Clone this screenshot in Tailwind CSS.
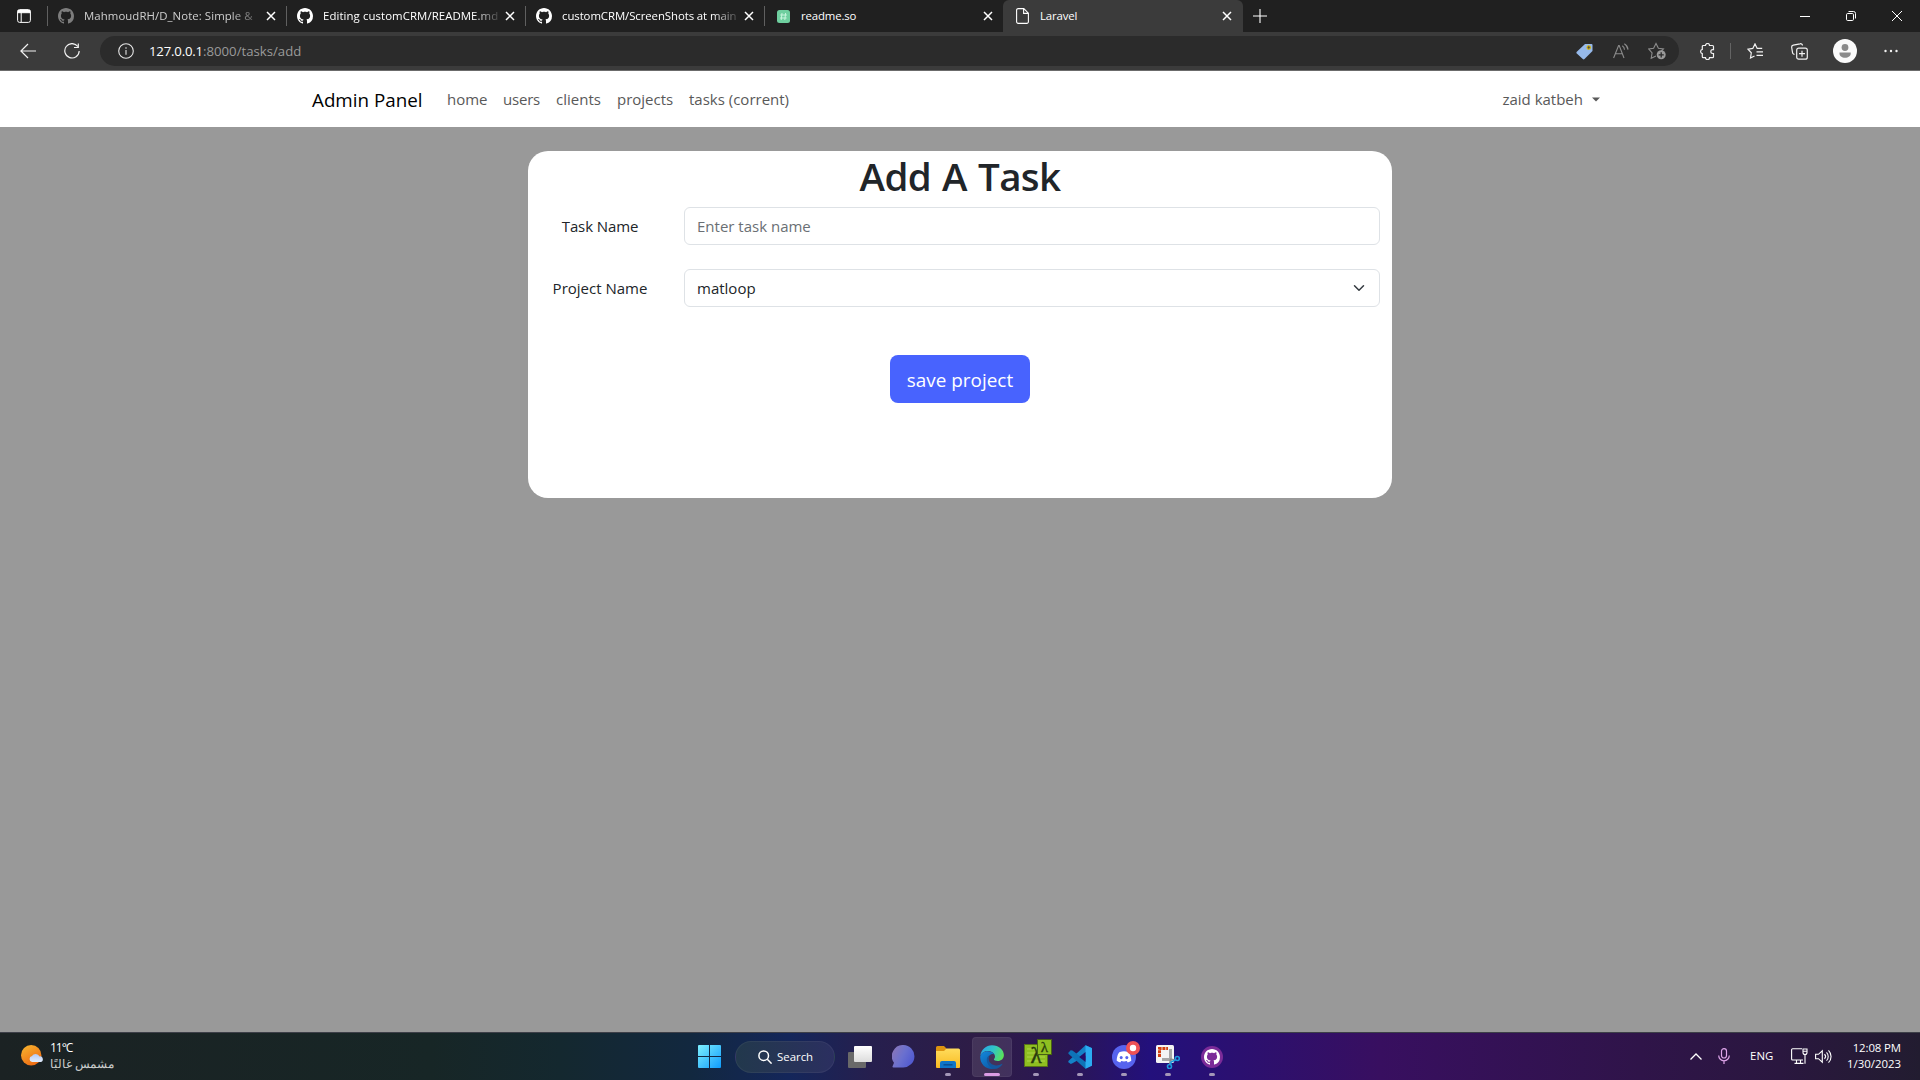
<!DOCTYPE html>
<html lang="en">
<head>
<meta charset="utf-8">
<title>Laravel</title>
<script src="https://cdn.jsdelivr.net/npm/@tailwindcss/browser@4"></script>
</head>
<body class="flex h-[1080px] w-[1920px] flex-col overflow-hidden bg-[#999999] font-['Open_Sans','Noto_Sans',sans-serif]">
<svg class="hidden">
  <symbol id="gh" viewBox="0 0 16 16"><path d="M8 0C3.58 0 0 3.58 0 8c0 3.54 2.29 6.53 5.47 7.59.4.07.55-.17.55-.38 0-.19-.01-.82-.01-1.49-2.01.37-2.53-.49-2.69-.94-.09-.23-.48-.94-.82-1.13-.28-.15-.68-.52-.01-.53.63-.01 1.08.58 1.23.82.72 1.21 1.87.87 2.33.66.07-.52.28-.87.51-1.07-1.78-.2-3.64-.89-3.64-3.95 0-.87.31-1.59.82-2.15-.08-.2-.36-1.02.08-2.12 0 0 .67-.21 2.2.82.64-.18 1.32-.27 2-.27s1.36.09 2 .27c1.53-1.04 2.2-.82 2.2-.82.44 1.1.16 1.92.08 2.12.51.56.82 1.27.82 2.15 0 3.07-1.87 3.75-3.65 3.95.29.25.54.73.54 1.48 0 1.07-.01 1.93-.01 2.2 0 .21.15.46.55.38A8.01 8.01 0 0 0 16 8c0-4.42-3.58-8-8-8z"/></symbol>
  <symbol id="x" viewBox="0 0 10 10"><path d="M1 1l8 8M9 1l-8 8" fill="none" stroke="currentColor" stroke-width="1.5"/></symbol>
</svg>

<!-- tab strip -->
<div class="flex h-8 shrink-0 items-center bg-[#202020] text-[11.4px] text-white">
  <div class="flex w-[47px] items-center pl-[17px]">
    <svg class="size-[14px]" viewBox="0 0 14 14" fill="none" stroke="#fff"><rect x=".6" y=".6" width="12.8" height="12.8" rx="2"/><path d="M1 1.5h12v2.2H1z" fill="#fff"/><path d="M4.2 3v10"/></svg>
  </div>
  <div class="flex h-5 w-[239px] items-center border-l border-[#606060] pl-[10px]">
    <svg class="size-4 text-[#7d7d7d]" fill="currentColor"><use href="#gh"/></svg>
    <span class="ml-[10px] w-[176px] whitespace-nowrap text-[#cfcfcf] tracking-[0.07px] [mask-image:linear-gradient(to_right,#000_146px,transparent_182px)]">MahmoudRH/D_Note: Simple &amp;</span>
    <svg class="ml-[6px] size-[10px]"><use href="#x"/></svg>
  </div>
  <div class="flex h-5 w-[239px] items-center border-l border-[#606060] pl-[10px]">
    <svg class="size-4" fill="#fff"><use href="#gh"/></svg>
    <span class="ml-[10px] w-[176px] whitespace-nowrap tracking-[0.08px] [mask-image:linear-gradient(to_right,#000_150px,transparent_180px)]">Editing customCRM/README.md</span>
    <svg class="ml-[6px] size-[10px]"><use href="#x"/></svg>
  </div>
  <div class="flex h-5 w-[239px] items-center border-l border-[#606060] pl-[10px]">
    <svg class="size-4" fill="#fff"><use href="#gh"/></svg>
    <span class="ml-[10px] w-[176px] whitespace-nowrap tracking-[-0.08px] [mask-image:linear-gradient(to_right,#000_150px,transparent_180px)]">customCRM/ScreenShots at main</span>
    <svg class="ml-[6px] size-[10px]"><use href="#x"/></svg>
  </div>
  <div class="flex h-5 w-[239px] items-center border-l border-[#606060] pl-[12px]">
    <svg class="size-[13px]" viewBox="0 0 13 13"><rect width="13" height="13" rx="2.5" fill="#6fcf9f"/><path d="M5 3l-.8 7M8.6 3l-.8 7M3.3 5h6.6M3 8h6.6" stroke="#c8f5dd" fill="none"/></svg>
    <span class="ml-[11px] w-[176px] whitespace-nowrap tracking-[-0.15px]">readme.so</span>
    <svg class="ml-[6px] size-[10px]"><use href="#x"/></svg>
  </div>
  <div class="flex h-8 w-[240px] items-center rounded-t-md bg-[#3b3b3b] pl-[13px]">
    <svg class="h-4 w-[13px]" viewBox="0 0 13 16" fill="none" stroke="#fff" stroke-width="1.1"><path d="M2.4.6h5.4l4.6 4.6v8.6a1.6 1.6 0 0 1-1.6 1.6H2.2A1.6 1.6 0 0 1 .6 13.8V2.2A1.6 1.6 0 0 1 2.4.6zM7.6.8v4.6h4.6"/></svg>
    <span class="ml-[11px] w-[176px] whitespace-nowrap tracking-[-0.15px]">Laravel</span>
    <svg class="ml-[6px] size-[10px]"><use href="#x"/></svg>
  </div>
  <svg class="ml-[10px] size-[14px]" viewBox="0 0 14 14" stroke="#fff" stroke-width="1.1"><path d="M7 0v14M0 7h14"/></svg>
  <div class="ml-auto mr-[18px] flex items-center gap-9 text-white">
    <svg class="size-[10px]" viewBox="0 0 10 10" stroke="#fff"><path d="M0 5.5h10"/></svg>
    <svg class="size-[10px]" viewBox="0 0 10 10" fill="none" stroke="#fff"><rect x=".5" y="2.5" width="7" height="7" rx="1.2"/><path d="M2.5.5H7.5a2 2 0 0 1 2 2V7.5"/></svg>
    <svg class="size-[10px]" viewBox="0 0 10 10" stroke="#fff"><path d="M0 0l10 10M10 0L0 10"/></svg>
  </div>
</div>

<!-- toolbar -->
<div class="flex h-[39px] shrink-0 items-center border-b border-[#6b6b6b] bg-[#3b3b3b] pl-5">
  <svg class="h-4 w-4" viewBox="0 0 16 16" fill="none" stroke="#f2f2f2" stroke-width="1.2"><path d="M16 8H1M8 1L.9 8 8 15"/></svg>
  <svg class="ml-7 h-4 w-4" viewBox="0 0 16 16" fill="none" stroke="#f2f2f2" stroke-width="1.2"><path d="M13.8 3.5A7.2 7.2 0 1 0 15.200 8M14.300.5V4.500H10"/></svg>
  <div class="ml-5 flex h-[30px] w-[1579px] items-center rounded-full bg-[#2b2b2b] pl-[18px] text-[13.2px]">
    <svg class="size-4" viewBox="0 0 16 16" fill="none" stroke="#e6e6e6" stroke-width="1.1"><circle cx="8" cy="8" r="7.3"/><path d="M8 7v4.800M8 4.200v1.500"/></svg>
    <span class="ml-[15px] w-[54px] pt-[2px] text-white tracking-[-0.2px]">127.0.0.1</span><span class="pt-[2px] text-[#9a9a9a]">:8000/tasks/add</span>
    <div class="ml-auto mr-[13px] flex items-center">
      <svg class="h-[17px] w-[17px]" viewBox="0 0 17 17"><path d="M9 1h6.500a1 1 0 0 1 1 1v6L8.500 16a1.200 1.200 0 0 1-1.700 0L.8 10.500a1.200 1.200 0 0 1 0-1.700z" fill="#96b9ea"/><circle cx="12.700" cy="4.500" r="1.700" fill="#4b4b4b" stroke="#d9b400" stroke-width="1.100"/></svg>
      <svg class="ml-5 h-4 w-4" viewBox="0 0 16 16" fill="none" stroke="#8c8c8c" stroke-width="1.1"><path d="M.6 15L5.600 2.500h.6L11 15M2.400 10.800h6.900M9.300 2.800a5 5 0 0 1 2.200 4M11.300.8a7.500 7.500 0 0 1 3.700 5.800"/></svg>
      <svg class="ml-[19px] h-[18px] w-[18px]" viewBox="0 0 18 18" fill="none" stroke="#8c8c8c" stroke-width="1.1"><path d="M8 14l-4.800 2.200.9-5.300L.8 7l4.800-.7L8 1.500l2.400 4.800 5 .7-2 2"/><circle cx="13.200" cy="12.800" r="4.500" fill="#9a9a9a" stroke="none"/><path d="M13.200 10.200v5.200M10.600 12.800h5.200" stroke="#2b2b2b" stroke-width="1.3"/></svg>
    </div>
  </div>
  <svg class="ml-[20px] h-[17px] w-4" viewBox="0 0 16 17" fill="none" stroke="#f2f2f2" stroke-width="1.2"><path d="M4.300 2.500h2.200a2 2 0 0 1 4 0h3a1 1 0 0 1 1 1v3.200h-.8a1.900 1.900 0 0 0 0 3.800h.8v3.200a1 1 0 0 1-1 1h-3a2 2 0 0 1-4 0H4.300a1 1 0 0 1-1-1v-3a2.200 2.200 0 0 1 0-4.300V3.500a1 1 0 0 1 1-1z"/></svg>
  <div class="ml-[15px] h-4 w-px bg-[#646464]"></div>
  <svg class="ml-4 h-4 w-4" viewBox="0 0 16 16" fill="none" stroke="#f2f2f2" stroke-width="1.2"><path d="M7.500 13l-4 2 .8-5.200L1 6.200l4.800-.8L8 .9l2.200 4.500h5M9.500 8.800H16M9.500 12.300H16"/></svg>
  <svg class="ml-7 h-[17px] w-[17px]" viewBox="0 0 17 17" fill="none" stroke="#f2f2f2" stroke-width="1.2"><path d="M3.500 11.500l-1-.5a2 2 0 0 1-1-1.500L.7 4.500A2 2 0 0 1 2.300 2.200L9 .8a2 2 0 0 1 2.500 1.700"/><rect x="5.700" y="5.200" width="10.600" height="11" rx="2"/><path d="M11 7.700v6M8 10.700h6"/></svg>
  <svg class="ml-[25px] size-6" viewBox="0 0 24 24"><circle cx="12" cy="12" r="12" fill="#fafafa"/><circle cx="12" cy="8.500" r="3.400" fill="#8a8a8a"/><path d="M6.500 13.500h11.200v1c0 2.500-2.300 4.300-5.600 4.300s-5.600-1.800-5.600-4.300z" fill="#8a8a8a"/></svg>
  <svg class="ml-[27px] h-1 w-[14px]" viewBox="0 0 14 4" fill="#f2f2f2"><circle cx="1.500" cy="2" r="1.200"/><circle cx="7" cy="2" r="1.200"/><circle cx="12.500" cy="2" r="1.200"/></svg>
</div>

<!-- site navigation -->
<nav class="flex h-14 shrink-0 items-center bg-white pl-[312px] pr-[320px] text-[15px] text-[#595959]">
  <a class="w-[135px] pt-[2px] text-[18.8px] text-black">Admin Panel</a>
  <a class="w-[56px]">home</a>
  <a class="w-[53px] tracking-[-0.2px]">users</a>
  <a class="w-[61px]">clients</a>
  <a class="w-[72px]">projects</a>
  <a>tasks (corrent)</a>
  <a class="ml-auto flex items-center">zaid katbeh
    <svg class="ml-[9px] h-[5px] w-[8px]" viewBox="0 0 9 5" fill="#595959"><path d="M0 .3h9L4.500 4.800z"/></svg>
  </a>
</nav>

<main class="flex flex-1 flex-col items-center pt-6">
  <section class="flex h-[347px] w-[864px] flex-col rounded-[20px] bg-white pr-3 text-[15px] text-[#212529]">
    <h1 class="ml-3 h-14 whitespace-nowrap text-center text-[38.5px]/[51px] font-semibold tracking-[-0.6px] [word-spacing:1.6px]">Add A Task</h1>
    <div class="flex h-[38px] items-center">
      <label class="w-[144px] text-center tracking-[-0.1px]">Task Name</label>
      <div class="ml-3 flex h-full flex-1 items-center rounded-md border border-[#dee2e6] px-3 text-[#6a6f74]">Enter task name</div>
    </div>
    <div class="mt-6 flex h-[38px] items-center">
      <label class="w-[144px] text-center">Project Name</label>
      <div class="ml-3 flex h-full flex-1 items-center justify-between rounded-md border border-[#dee2e6] pl-3 pr-[14px]">matloop
        <svg class="h-3 w-3" viewBox="0 0 16 16" fill="none" stroke="#343a40" stroke-linecap="round" stroke-linejoin="round" stroke-width="2"><path d="m2 5 6 6 6-6"/></svg>
      </div>
    </div>
    <button class="ml-[362px] mt-12 h-12 w-[140px] rounded-lg bg-[#4863fe] pt-[2px] text-[18.9px] text-white">save project</button>
  </section>
</main>

<!-- taskbar -->
<footer class="flex h-12 shrink-0 items-center border-t border-[#3d3f48] bg-[linear-gradient(90deg,#1b2223_0px,#172626_430px,#14282f_560px,#12283f_690px,#14265a_790px,#261f4e_870px,#2e1c46_980px,#2a1656_1070px,#23107c_1150px,#2b1070_1240px,#380f60_1380px,#2f1449_1640px,#2a173f_1780px,#221c30_1920px)] text-[11.4px] text-white">
  <div class="flex w-[698px] items-center pb-[2px] pl-[21px]">
    <svg class="h-[22px] w-[23px]" viewBox="0 0 23 22"><defs><linearGradient id="sun" x1="0" y1="0" x2=".6" y2="1"><stop stop-color="#f8b830"/><stop offset="1" stop-color="#ee6c14"/></linearGradient><linearGradient id="cl" x1="0" y1="0" x2="0" y2="1"><stop stop-color="#b5c9f3"/><stop offset="1" stop-color="#e2edfd"/></linearGradient></defs><circle cx="10.200" cy="10.300" r="10.200" fill="url(#sun)"/><path d="M11 17a3 3 0 0 1 0-5.900 4.200 4.200 0 0 1 7.500.3A2.800 2.800 0 0 1 19.500 17z" fill="url(#cl)"/></svg>
    <div class="ml-[6px] flex flex-col leading-4">
      <span class="text-[12px] tracking-[-1px]">11°C</span>
      <span class="text-[12px] text-[#c9cccc]" lang="ar" dir="rtl">مشمس غالبًا</span>
    </div>
  </div>
  <svg class="size-[23px]" viewBox="0 0 23 23"><defs><linearGradient id="w" gradientUnits="userSpaceOnUse" x1="0" y1="0" x2="23" y2="23"><stop stop-color="#7df0ff"/><stop offset="1" stop-color="#0f9bfc"/></linearGradient></defs><path d="M0 1a1 1 0 0 1 1-1h10v11H0zM12 0h10a1 1 0 0 1 1 1v10H12zM0 12h11v11H1a1 1 0 0 1-1-1zM12 12h11v10a1 1 0 0 1-1 1H12z" fill="url(#w)"/></svg>
  <div class="ml-[14px] flex h-8 w-[100px] items-center rounded-full border border-white/5 bg-gradient-to-r from-[#22384c] to-[#2b2f60] pl-[22px]">
    <svg class="size-[14px]" viewBox="0 0 14 14" fill="none" stroke="#fff" stroke-width="1.5"><circle cx="5.700" cy="5.700" r="4.800"/><path d="M9.300 9.300l4.300 4.300"/></svg>
    <span class="ml-[5px]">Search</span>
  </div>
  <svg class="ml-[13px] h-[22px] w-6" viewBox="0 0 24 22"><defs><linearGradient id="tv" x1="0" y1="0" x2="0" y2="1"><stop stop-color="#fff"/><stop offset="1" stop-color="#dcdcdc"/></linearGradient></defs><rect y="6" width="18" height="16" rx="1" fill="#696969"/><rect x="6" width="18" height="16" rx="1" fill="url(#tv)"/></svg>
  <svg class="ml-5 h-[23px] w-[23px]" viewBox="0 0 23 23"><defs><linearGradient id="ch" x1="0" y1=".2" x2="1" y2=".7"><stop stop-color="#8a76b8"/><stop offset=".5" stop-color="#6a70cf"/><stop offset="1" stop-color="#4f58d0"/></linearGradient></defs><path d="M11.500 0a11.200 11.200 0 1 1-.5 22.400H1.500a1 1 0 0 1-.8-1.500l1.300-3.100A11.200 11.200 0 0 1 11.500 0z" fill="url(#ch)"/></svg>
  <div class="relative ml-[11px] flex h-10 w-[44px] items-center justify-center">
    <svg class="h-[22px] w-6" viewBox="0 0 24 22"><defs><linearGradient id="fo" x1="0" y1="0" x2="0" y2="1"><stop stop-color="#ffdc5c"/><stop offset="1" stop-color="#f9bb22"/></linearGradient></defs><path d="M0 1.500A1.500 1.500 0 0 1 1.500 0H8l2.500 2.500V7H0z" fill="#dd9410"/><path d="M0 5h8l2.500-2.500h12A1.500 1.500 0 0 1 24 4v17a1 1 0 0 1-1 1H1a1 1 0 0 1-1-1z" fill="url(#fo)"/><path d="M4 22v-5a2 2 0 0 1 2-2h12a2 2 0 0 1 2 2v5z" fill="#0f74c8"/><path d="M7.500 18.800h9" stroke="#0a4f94" stroke-width="1.5"/></svg>
    <i class="absolute bottom-[1px] h-[3px] w-[6px] rounded-full bg-[#a497b8]"></i>
  </div>
  <div class="relative mx-[2px] flex h-10 w-10 items-center justify-center rounded border border-white/5 bg-white/10">
    <svg class="size-6" viewBox="0 0 24 24"><defs><linearGradient id="e1" x1="0" y1=".3" x2="1" y2=".6"><stop stop-color="#2aa6e4"/><stop offset=".5" stop-color="#30c4c8"/><stop offset="1" stop-color="#5be356"/></linearGradient><linearGradient id="e2" x1="0" y1="0" x2=".7" y2="1"><stop stop-color="#1389dc"/><stop offset="1" stop-color="#0c5aa8"/></linearGradient></defs><path d="M.3 10.500C1.200 4.500 6 .2 12 .2c6.800 0 11.900 4.600 11.900 9.800 0 3.700-2.900 6-6.100 6-2.500 0-3.900-.8-3.900-1.500 0-.6 1.100-1.100 1.100-3 0-2.700-3-5.400-7-5.400-3.500 0-6.500 1.900-7.700 4.400z" fill="url(#e1)"/><path d="M.2 11.500C1 8.300 4 6.200 7.700 6.200c3.400 0 5.700 1.500 6.700 3.300-1-.5-2-.6-3-.3C8.700 10 7.800 13 8.600 16c1.100 4 4.500 6.600 8 7-1.400.7-3 1-4.600 1C5.200 24 0 18.600.2 11.500z" fill="url(#e2)"/><path d="M10.200 10c-2.500 2-2 6 .5 8.300 3 2.700 7.700 2.700 11.200.5.5-.3.8.1.5.5-1.400 2-3.300 3.600-5.700 4.400-4 .2-8.200-2.200-9.500-6.500C6.100 13.500 7.500 10.800 10.200 10z" fill="#15579e"/></svg>
    <i class="absolute bottom-0 h-[3px] w-4 rounded-full bg-[#dc9ce4]"></i>
  </div>
  <div class="relative flex h-10 w-11 items-center justify-center">
    <svg class="absolute top-[1px] left-[9px] h-[30px] w-[31px]" viewBox="0 0 31 30"><rect x="1.500" y="6.500" width="23" height="22" fill="#8fbf21" stroke="#587318"/><path d="M4 11h18M4 15h18M4 19h18M4 23h18" stroke="#acd64a"/><text x="13" y="25" text-anchor="middle" font-family="Liberation Serif" font-size="23" fill="#273b0d" stroke="#273b0d" stroke-width=".5">λ</text><rect x="14.500" y="1.500" width="14" height="15" fill="#8fbf21" stroke="#486014"/><text x="21.500" y="13.500" text-anchor="middle" font-family="Liberation Serif" font-size="15" fill="#273b0d" stroke="#273b0d" stroke-width=".3">λ</text></svg>
    <i class="absolute bottom-[1px] h-[3px] w-[6px] rounded-full bg-[#a497b8]"></i>
  </div>
  <div class="relative flex h-10 w-11 items-center justify-center">
    <svg class="size-6" viewBox="0 0 24 24"><path d="M17.500.3L24 3v4L4.500 18.200 2.800 19 .3 17.300l.1-1.200z" fill="#1482c8"/><path d="M.4 7.800L2.700 5.300l1.700.2L24 20l-6.500 3.700L.4 8.800z" fill="#0e73b8"/><path d="M17.500.3L24 3.200v17.600l-6.500 2.900z" fill="#2bacf2"/><path d="M17.500 7v10l-6.300-5z" fill="#250f68"/></svg>
    <i class="absolute bottom-[1px] h-[3px] w-[6px] rounded-full bg-[#a497b8]"></i>
  </div>
  <div class="relative flex h-10 w-11 items-center justify-center">
    <svg class="size-6" viewBox="0 0 24 24"><circle cx="12" cy="12" r="12" fill="#5663ee"/><path d="M8 7a13 13 0 0 1 8 0c1.800.4 3.200 5 3.300 8.700-1 .9-2.300 1.500-3.600 1.800l-.9-1.500c-1.800.5-3.800.5-5.600 0l-.9 1.500c-1.300-.3-2.600-.9-3.600-1.800C4.800 12 6.200 7.400 8 7z" fill="#fff"/><ellipse cx="9.200" cy="12.600" rx="1.500" ry="1.700" fill="#5663ee"/><ellipse cx="14.800" cy="12.600" rx="1.500" ry="1.700" fill="#5663ee"/></svg>
    <svg class="absolute left-6 top-[4px] size-[14px]" viewBox="0 0 14 14"><circle cx="7" cy="7" r="7" fill="#ee5155"/><circle cx="7" cy="7" r="3.200" fill="#fff"/></svg>
    <i class="absolute bottom-[1px] h-[3px] w-[6px] rounded-full bg-[#a497b8]"></i>
  </div>
  <div class="relative flex h-10 w-11 items-center justify-center">
    <svg class="size-6" viewBox="0 0 24 24"><rect width="18" height="18" rx="1.500" fill="#f4f4f4"/><path d="M3.500 12V3.500H12" fill="none" stroke="#d23f0f" stroke-width="3" stroke-dasharray="3 .8"/><path d="M14.500 4v12M6 14.500h10" stroke="#a7a7a7" stroke-width="3"/><path d="M14 14l5 1M14.500 14l-1 6" stroke="#8b8b8b" stroke-width="1.5"/><g fill="none" stroke="#1e9be0" stroke-width="1.6"><circle cx="21.300" cy="13.500" r="2"/><circle cx="13.500" cy="21.500" r="2"/><path d="M19.500 15l-4.500 2-.5 3"/></g></svg>
    <i class="absolute bottom-[1px] h-[3px] w-[6px] rounded-full bg-[#a497b8]"></i>
  </div>
  <div class="relative flex h-10 w-11 items-center justify-center">
    <svg class="size-[22px]" viewBox="0 0 22 22"><circle cx="11" cy="11" r="11" fill="#7b2b98"/><svg x="3" y="3" width="16" height="16" fill="#fff"><use href="#gh"/></svg></svg>
    <i class="absolute bottom-[1px] h-[3px] w-[6px] rounded-full bg-[#a497b8]"></i>
  </div>
  <div class="ml-auto mr-[19px] flex items-center pb-px">
    <svg class="h-[7px] w-3" viewBox="0 0 12 7" fill="none" stroke="#fff" stroke-width="1.3"><path d="M.5 6.500L6 1l5.500 5.500"/></svg>
    <svg class="ml-4 h-4 w-3" viewBox="0 0 12 16" fill="none" stroke="#dfa5ea" stroke-width="1.2"><rect x="3.500" y=".6" width="5" height="9.400" rx="2.500"/><path d="M.7 7.500a5.300 5.300 0 0 0 10.600 0M6 13v3"/></svg>
    <span class="ml-[20px] w-[41px]">ENG</span>
    <svg class="h-4 w-[17px]" viewBox="0 0 17 16" fill="none" stroke="#fff" stroke-width="1.1"><path d="M11 .8H1.600A1 1 0 0 0 .6 1.800V11a1 1 0 0 0 1 1H12M3.500 15.400h9M5.500 12v3.400M9.500 12v3.400M12 1h4v3.500a2 2 0 0 1-4 0zM14 6.500V15.800M12 3.300h4"/></svg>
    <svg class="ml-[7px] h-[15px] w-[17px]" viewBox="0 0 17 15" fill="none" stroke="#fff" stroke-width="1.1"><path d="M.6 5.300h2.900L7.300 1.800v11.400L3.500 9.700H.6zM9.500 5.200a3.300 3.300 0 0 1 0 4.600M11.500 3.300a6 6 0 0 1 0 8.400M13.500 1.300a8.800 8.800 0 0 1 0 12.400"/></svg>
    <div class="ml-[15px] flex flex-col text-right leading-4"><span class="whitespace-nowrap tracking-[-0.1px]">12:08 PM</span><span>1/30/2023</span></div>
  </div>
</footer>
</body>
</html>
